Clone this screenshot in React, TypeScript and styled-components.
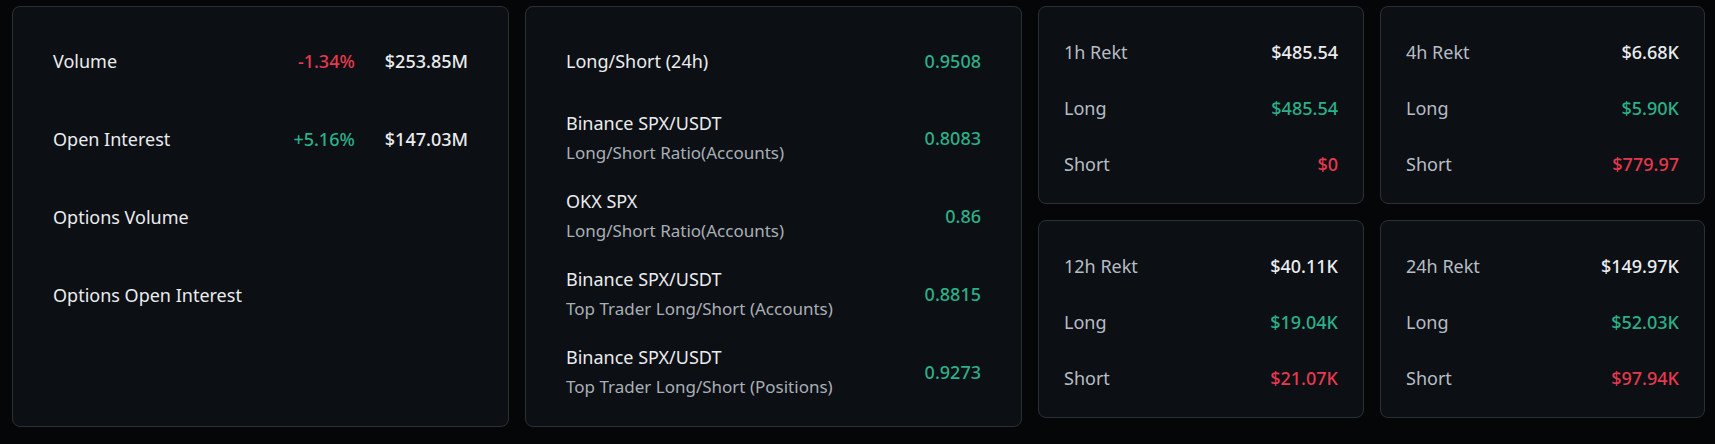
import React from "react";
import styled, { createGlobalStyle } from "styled-components";

const GlobalStyle = createGlobalStyle`
  html, body {
    margin: 0;
    padding: 0;
    background: #050608;
  }
  body {
    font-family: "Noto Sans", "Liberation Sans", sans-serif;
    color: #eaecef;
    -webkit-font-smoothing: antialiased;
  }
`;

const Page = styled.div`
  display: grid;
  grid-template-columns: 497px 497px 667px;
  gap: 16px;
  padding: 6px 10px 17px 12px;
  align-items: start;
`;

const Card = styled.section`
  box-sizing: border-box;
  background: #0c0f13;
  border: 1px solid #2b3036;
  border-radius: 8px;
`;

const StatsCard = styled(Card)`
  height: 421px;
  padding: 24px 40px;
  display: flex;
  flex-direction: column;
  gap: 18px;
`;

const StatRow = styled.div`
  height: 60px;
  display: flex;
  align-items: center;
`;

const Label = styled.div`
  flex: 1;
  font-size: 18px;
  line-height: 30px;
  color: #eaecef;
`;

const Change = styled.div<{ $up: boolean }>`
  font-size: 18px;
  font-weight: 500;
  color: ${(p) => (p.$up ? "#2bb088" : "#e5394f")};
`;

const Amount = styled.div`
  margin-left: 30px;
  min-width: 82px;
  text-align: right;
  font-size: 18px;
  font-weight: 500;
  color: #eaecef;
`;

const TwoLine = styled.div`
  flex: 1;
  display: flex;
  flex-direction: column;
`;

const Sub = styled.div`
  font-size: 17px;
  line-height: 30px;
  color: #a9afb7;
`;

const Ratio = styled.div`
  font-size: 18px;
  font-weight: 500;
  color: #2bb088;
`;

const RektGrid = styled.div`
  display: grid;
  grid-template-columns: 326px 325px;
  gap: 16px;
`;

const RektCard = styled(Card)`
  height: 198px;
  padding: 33px 25px 25px;
  display: flex;
  flex-direction: column;
  gap: 32px;
`;

const RektRow = styled.div`
  display: flex;
  align-items: center;
  justify-content: space-between;
  height: 24px;
`;

const RektLabel = styled.div`
  font-size: 18px;
  color: #b7bdc6;
`;

const RektValue = styled.div<{ $tone: "total" | "long" | "short" }>`
  font-size: 18px;
  font-weight: 500;
  color: ${(p) =>
    p.$tone === "long" ? "#2bb088" : p.$tone === "short" ? "#e5394f" : "#eaecef"};
`;

const stats = [
  { label: "Volume", change: "-1.34%", up: false, amount: "$253.85M" },
  { label: "Open Interest", change: "+5.16%", up: true, amount: "$147.03M" },
  { label: "Options Volume" },
  { label: "Options Open Interest" },
];

const ratios = [
  { title: "Binance SPX/USDT", sub: "Long/Short Ratio(Accounts)", value: "0.8083" },
  { title: "OKX SPX", sub: "Long/Short Ratio(Accounts)", value: "0.86" },
  { title: "Binance SPX/USDT", sub: "Top Trader Long/Short (Accounts)", value: "0.8815" },
  { title: "Binance SPX/USDT", sub: "Top Trader Long/Short (Positions)", value: "0.9273" },
];

const rekts = [
  { title: "1h Rekt", total: "$485.54", long: "$485.54", short: "$0" },
  { title: "4h Rekt", total: "$6.68K", long: "$5.90K", short: "$779.97" },
  { title: "12h Rekt", total: "$40.11K", long: "$19.04K", short: "$21.07K" },
  { title: "24h Rekt", total: "$149.97K", long: "$52.03K", short: "$97.94K" },
];

export default function App() {
  return (
    <>
      <GlobalStyle />
      <Page>
        <StatsCard>
          {stats.map((s) => (
            <StatRow key={s.label}>
              <Label>{s.label}</Label>
              {s.change && <Change $up={!!s.up}>{s.change}</Change>}
              {s.amount && <Amount>{s.amount}</Amount>}
            </StatRow>
          ))}
        </StatsCard>
        <StatsCard>
          <StatRow>
            <Label>Long/Short (24h)</Label>
            <Ratio>0.9508</Ratio>
          </StatRow>
          {ratios.map((r, i) => (
            <StatRow key={i}>
              <TwoLine>
                <Label>{r.title}</Label>
                <Sub>{r.sub}</Sub>
              </TwoLine>
              <Ratio>{r.value}</Ratio>
            </StatRow>
          ))}
        </StatsCard>
        <RektGrid>
          {rekts.map((r) => (
            <RektCard key={r.title}>
              <RektRow>
                <RektLabel>{r.title}</RektLabel>
                <RektValue $tone="total">{r.total}</RektValue>
              </RektRow>
              <RektRow>
                <RektLabel>Long</RektLabel>
                <RektValue $tone="long">{r.long}</RektValue>
              </RektRow>
              <RektRow>
                <RektLabel>Short</RektLabel>
                <RektValue $tone="short">{r.short}</RektValue>
              </RektRow>
            </RektCard>
          ))}
        </RektGrid>
      </Page>
    </>
  );
}
